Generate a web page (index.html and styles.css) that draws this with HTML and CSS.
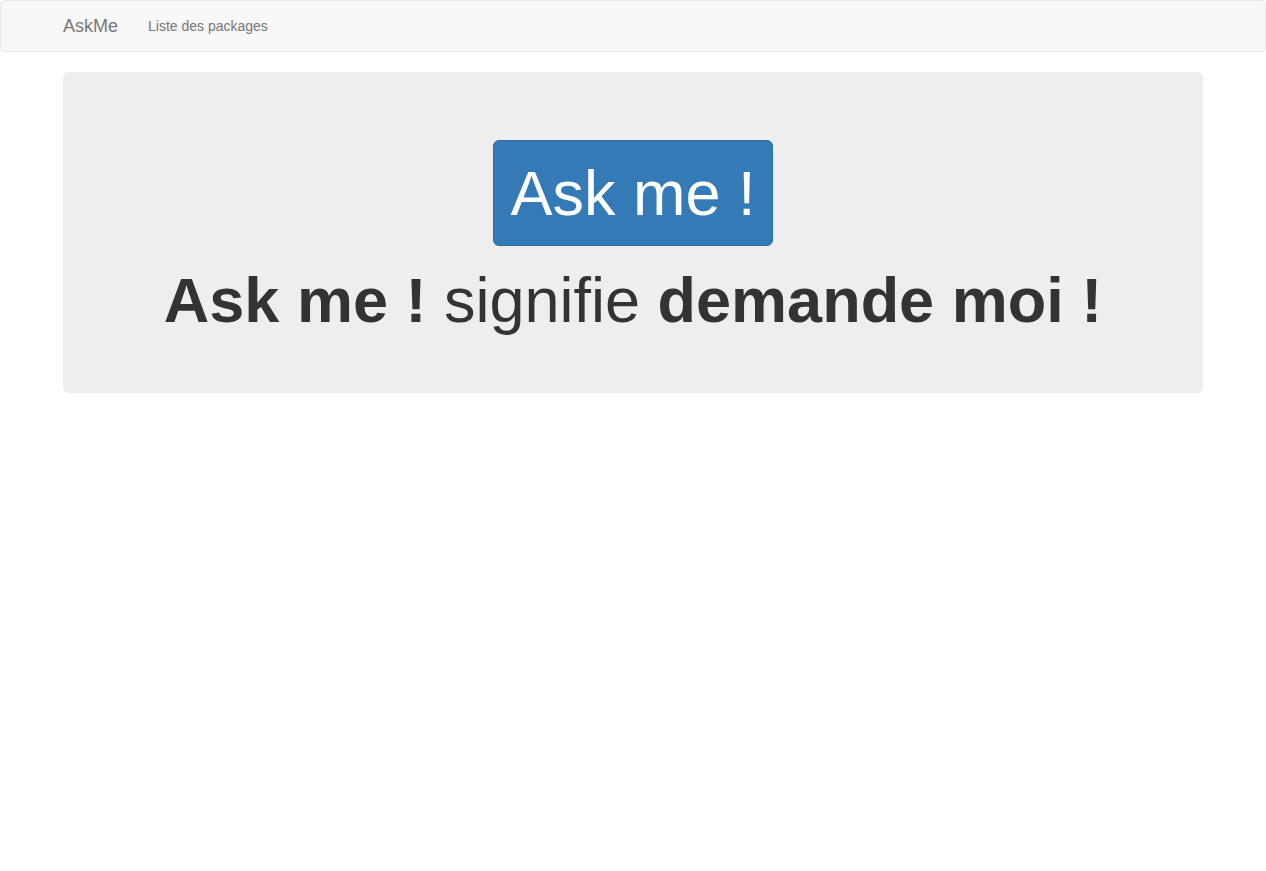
FILE: index.html
```html
<!DOCTYPE html>
<html lang="fr">
<head>
<meta charset="utf-8">
<title>AskMe</title>
<link rel="stylesheet" href="styles.css">
</head>
<body>
<nav class="navbar">
  <div class="container nav-inner">
    <a class="brand" href="#">AskMe</a>
    <ul class="nav-links">
      <li><a href="#">Liste des packages</a></li>
    </ul>
  </div>
</nav>
<div class="container">
  <div class="jumbotron">
    <h1 class="heading"><button class="btn-ask" type="button">Ask me !</button></h1>
    <h1 class="heading"><b>Ask me !</b> signifie <b>demande moi !</b></h1>
  </div>
</div>
</body>
</html>
```
FILE: styles.css
```css
* { box-sizing: border-box; }
html, body { margin: 0; padding: 0; }
body {
  font-family: "Liberation Sans", Arial, Helvetica, sans-serif;
  font-size: 14px;
  line-height: 1.42857143;
  color: #333;
  background: #fff;
}
.container {
  width: 1170px;
  margin: 0 auto;
  padding: 0 15px;
}
.navbar {
  min-height: 52px;
  background: #f8f8f8;
  border: 1px solid #e7e7e7;
  border-radius: 4px;
  margin-bottom: 20px;
}
.nav-inner {
  display: flex;
  align-items: stretch;
}
.brand {
  display: block;
  height: 50px;
  padding: 15px;
  margin-left: -15px;
  font-size: 18px;
  line-height: 20px;
  color: #777;
  text-decoration: none;
}
.nav-links {
  list-style: none;
  margin: 0;
  padding: 0;
  display: flex;
}
.nav-links a {
  display: block;
  padding: 15px;
  line-height: 20px;
  font-size: 14px;
  color: #777;
  text-decoration: none;
}
.jumbotron {
  background: #eee;
  border-radius: 6px;
  padding: 48px 60px;
  margin-bottom: 30px;
  text-align: center;
}
.heading {
  font-size: 63px;
  line-height: 1.1;
  font-weight: 500;
  margin: 20px 0 10px;
  color: #333;
}
.heading b { font-weight: 700; }
.btn-ask {
  display: inline-block;
  font-family: inherit;
  font-size: 63px;
  line-height: 84px;
  padding: 10px 16px;
  color: #fff;
  background: #337ab7;
  border: 1px solid #2e6da4;
  border-radius: 6px;
  cursor: pointer;
  vertical-align: baseline;
  margin: 0;
}
```
